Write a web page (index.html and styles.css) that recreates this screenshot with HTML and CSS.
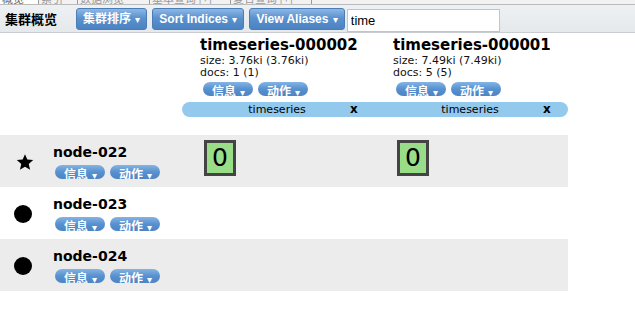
FILE: index.html
```html
<!DOCTYPE html>
<html lang="zh">
<head>
  <meta charset="UTF-8" />
  <title>集群概览</title>
  <link rel="stylesheet" href="styles.css">
</head>
<body>
  <div class="tabs">
    <span class="tab active">概览</span>
    <span class="tab">索引</span>
    <span class="tab wide">数据浏览</span>
    <span class="tab wider">基本查询 [+]</span>
    <span class="tab wider">复合查询 [+]</span>
  </div>

  <div class="toolbar">
    <span class="title">集群概览</span>
    <button class="btn">集群排序 <span class="caret">▾</span></button>
    <button class="btn">Sort Indices <span class="caret">▾</span></button>
    <button class="btn">View Aliases <span class="caret">▾</span></button>
    <input class="filter" type="text" value="time">
  </div>

  <div class="cluster">
    <div class="grid head">
      <div></div>
      <div class="index">
        <div class="index-name">timeseries-000002</div>
        <div class="meta">size: 3.76ki (3.76ki)</div>
        <div class="meta">docs: 1 (1)</div>
        <div class="pills">
          <span class="pill">信息 <span class="caret">▾</span></span>
          <span class="pill">动作 <span class="caret">▾</span></span>
        </div>
      </div>
      <div class="index">
        <div class="index-name">timeseries-000001</div>
        <div class="meta">size: 7.49ki (7.49ki)</div>
        <div class="meta">docs: 5 (5)</div>
        <div class="pills">
          <span class="pill">信息 <span class="caret">▾</span></span>
          <span class="pill">动作 <span class="caret">▾</span></span>
        </div>
      </div>
    </div>

    <div class="grid aliases">
      <div></div>
      <div class="alias first"><span>timeseries</span><b>x</b></div>
      <div class="alias last"><span>timeseries</span><b>x</b></div>
    </div>

    <div class="grid node shaded">
      <div class="node-info">
        <span class="icon">
          <svg width="18" height="18" viewBox="0 0 24 24"><path d="M12 1.5l3.1 7.2 7.8.7-5.9 5.2 1.8 7.7L12 18.3l-6.8 4 1.8-7.7-5.9-5.2 7.8-.7z" fill="#000"/></svg>
        </span>
        <div>
          <div class="node-name">node-022</div>
          <div class="pills">
            <span class="pill">信息 <span class="caret">▾</span></span>
            <span class="pill">动作 <span class="caret">▾</span></span>
          </div>
        </div>
      </div>
      <div class="shards"><span class="shard">0</span></div>
      <div class="shards"><span class="shard">0</span></div>
    </div>

    <div class="grid node">
      <div class="node-info">
        <span class="icon"><span class="dot"></span></span>
        <div>
          <div class="node-name">node-023</div>
          <div class="pills">
            <span class="pill">信息 <span class="caret">▾</span></span>
            <span class="pill">动作 <span class="caret">▾</span></span>
          </div>
        </div>
      </div>
      <div></div>
      <div></div>
    </div>

    <div class="grid node shaded">
      <div class="node-info">
        <span class="icon"><span class="dot"></span></span>
        <div>
          <div class="node-name">node-024</div>
          <div class="pills">
            <span class="pill">信息 <span class="caret">▾</span></span>
            <span class="pill">动作 <span class="caret">▾</span></span>
          </div>
        </div>
      </div>
      <div></div>
      <div></div>
    </div>
  </div>
</body>
</html>
```

FILE: styles.css
```css
html, body {
  margin: 0;
  padding: 0;
  background: #fff;
  color: #000;
  font-family: "DejaVu Sans", Verdana, "Noto Sans CJK SC", sans-serif;
}

/* 1. Tabs strip (scrolled mostly out of view) */
.tabs {
  display: flex;
  height: 4px;
  overflow: hidden;
  background: #f2f2f2;
  border-bottom: 1px solid #bbb;
  font-family: "Noto Sans CJK SC", sans-serif;
  font-size: 11px;
  line-height: 8px;
  color: #999;
}
.tab {
  width: 36px;
  padding-left: 2px;
  border-right: 1px solid #999;
  margin-top: -6px;
  white-space: nowrap;
  overflow: hidden;
}
.tab.active { background: #fff; color: #666; }
.tab.wide { width: 69px; }
.tab.wider { width: 78px; }

/* 2. Toolbar */
.toolbar {
  display: flex;
  align-items: center;
  gap: 5px;
  height: 27px;
  padding-left: 5px;
  background: linear-gradient(#eef1f4, #e6e9ec);
  border-bottom: 1px solid #c8ccd0;
}
.title {
  font-family: "Noto Sans CJK SC", sans-serif;
  font-size: 13px;
  font-weight: bold;
  width: 66px;
}
.btn {
  height: 22px;
  padding: 0 6px;
  margin-top: 1px;
  border: 1px solid #4a7db6;
  border-radius: 3px;
  background: linear-gradient(#8cb8e6, #5b91cd 45%, #4b82c2);
  color: #fff;
  font-family: "Liberation Sans", "Noto Sans CJK SC", sans-serif;
  font-size: 12px;
  font-weight: bold;
  line-height: 18px;
}
.btn .caret { font-size: 10px; margin-left: 1px; }
.caret { font-weight: normal; }
.filter {
  box-sizing: border-box;
  width: 153px;
  height: 23px;
  margin-left: -3px;
  margin-top: 4px;
  padding: 0 3px;
  border: 1px solid #c4c4c4;
  font-family: "Liberation Sans", sans-serif;
  font-size: 13px;
  color: #000;
}

/* 3. Cluster table */
.cluster { width: 568px; }
.grid {
  display: grid;
  grid-template-columns: 182px 193px 193px;
}
.head { padding-top: 3px; height: 66px; }
.index { padding-left: 18px; }
.index-name {
  font-size: 15px;
  font-weight: bold;
  line-height: 19px;
}
.meta {
  font-size: 11px;
  line-height: 12px;
  color: #111;
}
.pills {
  display: flex;
  gap: 5px;
}
.index .pills { margin-left: 3px; margin-top: 3px; }
.pill {
  display: inline-block;
  width: 50px;
  box-sizing: border-box;
  height: 14px;
  overflow: hidden;
  padding-left: 9px;
  border-radius: 8px;
  background: linear-gradient(#84b4e4, #5891cf 50%, #4c84c4);
  color: #fff;
  font-family: "Noto Sans CJK SC", sans-serif;
  font-size: 12px;
  font-weight: bold;
  line-height: 17px;
  white-space: nowrap;
}
.pill .caret { font-size: 10px; margin-left: 1px; }

.aliases { height: 15px; margin-bottom: 18px; }
.alias {
  display: flex;
  align-items: center;
  background: #94c9ee;
  font-size: 11px;
  line-height: 15px;
}
.alias span { width: 186px; text-align: center; margin-left: 2px; }
.alias b { font-size: 12px; margin-left: -20px; }
.alias.first { border-radius: 8px 0 0 8px; }
.alias.last { border-radius: 0 8px 8px 0; }

.node { height: 52px; }
.node.shaded { background: #ececec; }
.node-info {
  display: flex;
  align-items: center;
}
.icon {
  display: flex;
  justify-content: center;
  width: 50px;
  margin-top: 2px;
  margin-right: 3px;
}
.dot {
  width: 18px;
  height: 18px;
  margin-left: -4px;
  border-radius: 50%;
  background: #000;
}
.node-name {
  font-size: 14px;
  font-weight: bold;
  line-height: 16px;
}
.node .pills { margin-left: 2px; margin-top: 5px; }
.shards { padding: 5px 0 0 22px; }
.shard {
  display: inline-block;
  box-sizing: border-box;
  width: 32px;
  height: 36px;
  border: 3px solid #444;
  background: #99dd88;
  font-family: "DejaVu Sans", sans-serif;
  font-size: 25px;
  line-height: 29px;
  text-align: center;
}
```
